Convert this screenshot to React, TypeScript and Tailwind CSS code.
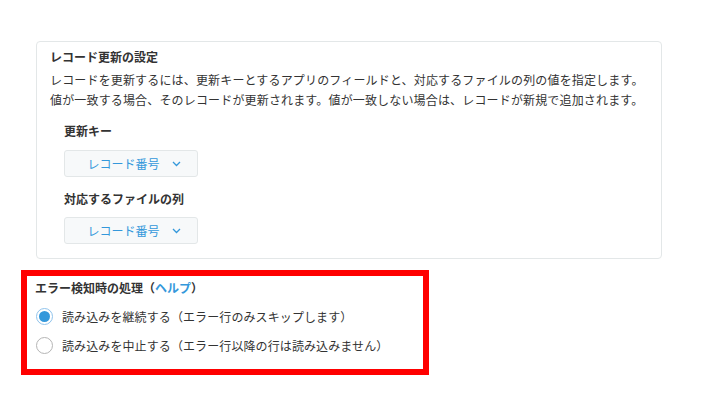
import React from "react";

const Chevron: React.FC = () => (
  <svg width="9" height="6" viewBox="0 0 9 6" className="ml-[12px]">
    <polyline points="1,1 4.5,4.5 8,1" fill="none" stroke="#3498db" strokeWidth="1.3" />
  </svg>
);

const Dropdown: React.FC<{ label: string }> = ({ label }) => (
  <div className="w-[134px] h-[27px] flex items-center justify-center border border-[#e3e7e8] bg-[#f7f9fa] rounded-[3px] text-[#3498db] pl-[6px]">
    <span>{label}</span>
    <Chevron />
  </div>
);

const Radio: React.FC<{ checked?: boolean; label: string }> = ({ checked, label }) => (
  <label className="flex items-center h-[29px]">
    {checked ? (
      <span className="w-[17px] h-[17px] rounded-full border-[1.5px] border-[#8fc3ec] flex items-center justify-center">
        <span className="w-[11px] h-[11px] rounded-full bg-[#3498db]" />
      </span>
    ) : (
      <span className="w-[17px] h-[17px] rounded-full border border-[#b5b5b5] bg-white" />
    )}
    <span className="ml-[9px] text-[#333] tracking-[0.1px]">{label}</span>
  </label>
);

const App: React.FC = () => {
  return (
    <div
      className="w-[719px] h-[409px] bg-white text-[12px] leading-[20px] text-[#333]"
      style={{ fontFamily: '"Noto Sans CJK JP", "Noto Sans", sans-serif' }}
    >
      <div className="pt-[41px] pl-[36px]">
        {/* Record update settings */}
        <div className="w-[626px] border border-[#e3e7e8] rounded-[4px] pl-[13px] pt-[5px] pb-[14px]">
          <h3 className="font-bold">レコード更新の設定</h3>
          <p className="mt-[3px] tracking-[0.16px]">
            レコードを更新するには、更新キーとするアプリのフィールドと、対応するファイルの列の値を指定します。
            <br />
            値が一致する場合、そのレコードが更新されます。値が一致しない場合は、レコードが新規で追加されます。
          </p>
          <div className="pl-[14px]">
            <div className="mt-[11px] font-bold">更新キー</div>
            <div className="mt-[9px]">
              <Dropdown label="レコード番号" />
            </div>
            <div className="mt-[12px] font-bold">対応するファイルの列</div>
            <div className="mt-[8px]">
              <Dropdown label="レコード番号" />
            </div>
          </div>
        </div>
      </div>

      {/* Error handling */}
      <div className="ml-[21px] mt-[11px] w-[408px] h-[105px] border-[6px] border-[#ff0000] pl-[8px] pt-[2px]">
        <div className="font-bold">
          エラー検知時の処理（<span className="text-[#3498db]">ヘルプ</span>）
        </div>
        <div className="mt-[4px] pl-[1px]">
          <Radio checked label="読み込みを継続する（エラー行のみスキップします）" />
          <Radio label="読み込みを中止する（エラー行以降の行は読み込みません）" />
        </div>
      </div>
    </div>
  );
};

export default App;
